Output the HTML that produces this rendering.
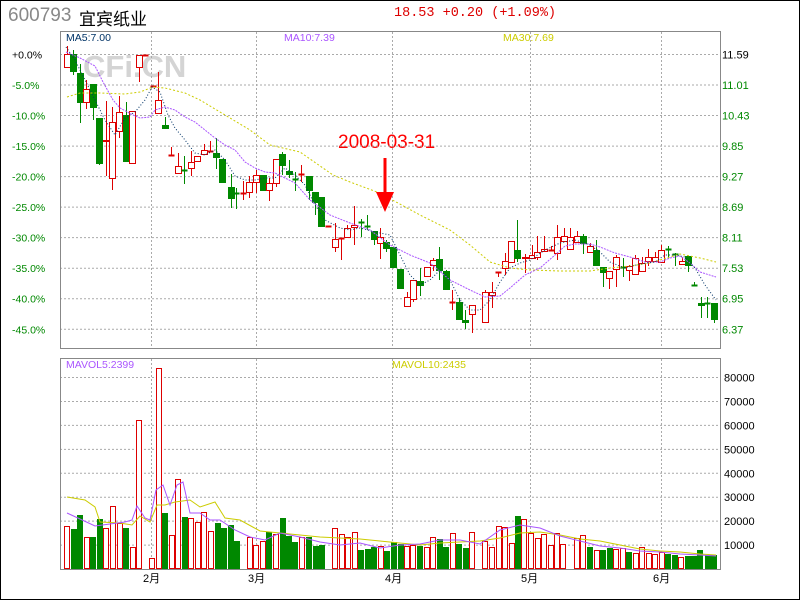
<!DOCTYPE html>
<html><head><meta charset="utf-8"><style>
html,body{margin:0;padding:0;background:#fff}
#c{position:relative;width:798px;height:598px;border:1px solid #000;overflow:hidden;font-family:"Liberation Sans","Noto Sans CJK SC",sans-serif}
.t{position:absolute;white-space:nowrap}
</style></head><body><div id="c">
<div class="t" style="left:7px;top:4px;font-size:19px;color:#888">600793</div>
<div class="t" style="left:78px;top:4px;font-size:17px;color:#000">宜宾纸业</div>
<div class="t" style="left:393px;top:5px;font-family:'Liberation Mono',monospace;font-size:13.5px;color:#d00">18.53 +0.20 (+1.09%)</div>
<svg id="s" width="800" height="600" style="position:absolute;left:-1px;top:-1px" xmlns="http://www.w3.org/2000/svg">
<g font-family="Liberation Sans, sans-serif" font-size="11">
<text x="338" y="148" font-size="19" fill="#f00" font-weight="normal">2008-03-31</text>
<text x="83" y="77" font-size="31" font-weight="bold" fill="#d4d4d4">CFi.CN</text>
</g>
</svg>
</div>
<script>
var s=document.getElementById('s'),NS='http://www.w3.org/2000/svg',h='';
function L(x1,y1,x2,y2,c,d,w){h+='<line x1="'+x1+'" y1="'+y1+'" x2="'+x2+'" y2="'+y2+'" stroke="'+c+'" stroke-width="'+(w||1)+'"'+(d?' stroke-dasharray="'+d+'"':'')+'/>';}
function T(x,y,t,c,fs,a){h+='<text x="'+x+'" y="'+y+'" fill="'+c+'" font-size="'+(fs||11)+'"'+(a?' text-anchor="'+a+'"':'')+' font-family="Liberation Sans, Noto Sans CJK SC, sans-serif">'+t+'</text>';}
// grids price
for(var i=0;i<10;i++){var y=54.5+i*30.53;L(60,y,720,y,'#aaa','2,2');
 T(12,y+4,(i==0?'+0.0%':'-'+(i*5)+'.0%'),i==0?'#000':'#080',10.5);
 T(722,y+4,(11.59-i*0.58).toFixed(2),i==0?'#000':'#080',11);}
var vx=[151.5,256.5,392.5,530.5,661.5];
vx.forEach(function(x){L(x,32,x,348,'#aaa','2,2');L(x,359,x,569,'#aaa','2,2');});
for(var i=1;i<=8;i++){var y=569-i*23.93;L(60,y,720,y,'#aaa','2,2');T(724,y+4,i*10000,'#000',11);}
h+='<rect x="60.5" y="31.5" width="660" height="317" fill="none" stroke="#888"/>';
h+='<rect x="60.5" y="358.5" width="660" height="211" fill="none" stroke="#888"/>';
[['2月',143],['3月',248],['4月',385],['5月',521],['6月',653]].forEach(function(m){T(m[1],582,m[0],'#000',11);});
T(66,41,'MA5:7.00','#036',10.5);T(284,41,'MA10:7.39','#a5f',10.5);T(503,41,'MA30:7.69','#cc0',10.5);
T(66,368,'MAVOL5:2399','#a5f',10.5);T(392,368,'MAVOL10:2435','#cc0',10.5);
// candles [x, top, bottom, high, low, color r/g]
var C=[[66.7,54,68,46,68,'r'],[73.3,54,72,50,75,'g'],[80,73,103,64,123,'g'],[86,89,103,80,109,'r'],[92.7,84,108,84,120,'g'],[99.3,118,164,118,165,'g'],[105.7,140,142,101,176,'r'],[112.3,122,179,107,190,'r'],[119.3,112,132,96,138,'r'],[126,115,162,102,162,'g'],[132.3,111,164,111,164,'r'],[138.5,55,68,55,82,'r'],[145,55,56,55,56,'r'],[152.7,86,87,86,87,'r'],[158.3,100,114,72,114,'r'],[165,125,129,117,129,'g'],[171,155,156,147,156,'r'],[177.7,166,174,153,174,'r'],[184.3,170,171,156,184,'g'],[191,162,169,151,176,'r'],[197,156,162,156,162,'r'],[203.7,150,155,144,155,'r'],[209.6,151,152,141,152,'r'],[216,153,158,138,169,'g'],[222.3,159,183,159,183,'g'],[230.7,187,199,174,208,'g'],[236.3,193,194,188,209,'g'],[243,193,194,181,200,'r'],[249,182,193,176,198,'r'],[256,175,183,170,193,'r'],[263,175,191,175,191,'g'],[269,183,191,178,201,'r'],[275.7,159,184,159,187,'r'],[282,154,166,152,175,'g'],[289,171,175,160,178,'g'],[295,179,180,172,191,'g'],[301,174,175,165,182,'r'],[309,176,191,176,200,'g'],[315,192,203,192,215,'g'],[321,197,227,197,227,'g'],[328,226,227,226,227,'r'],[334.7,239,248,223,252,'r'],[341,238,239,238,260,'r'],[347,228,238,225,238,'r'],[354,225,228,206,245,'r'],[360.7,222,223,219,237,'g'],[367,226,227,215,230,'g'],[373.7,231,240,231,245,'g'],[380,237,244,228,259,'r'],[386,242,249,240,252,'g'],[392.7,247,268,247,268,'g'],[400.3,269,289,269,289,'g'],[407,297,307,292,307,'r'],[413,280,300,280,302,'r'],[420,281,286,268,296,'g'],[426.7,267,277,267,277,'r'],[432.7,260,266,258,271,'r'],[438.7,259,271,247,280,'g'],[446,271,290,270,290,'g'],[452,302,303,290,310,'r'],[459,302,320,298,320,'g'],[465,320,323,310,329,'g'],[472,305,315,305,333,'r'],[484.7,292,323,290,323,'r'],[491.7,292,296,282,308,'r'],[498,272,273,272,277,'r'],[504.7,261,269,253,275,'r'],[511,241,263,241,263,'r'],[517,250,259,220,262,'g'],[524.7,257,259,254,273,'r'],[531.7,255,259,245,259,'r'],[537,252,258,236,260,'r'],[544,249,252,236,252,'r'],[550.7,250,251,246,251,'r'],[557,237,254,225,260,'r'],[564,236,242,228,242,'r'],[570,237,250,228,250,'r'],[577,236,243,231,243,'r'],[583,236,244,234,254,'g'],[589.7,246,253,243,253,'r'],[596,250,266,240,266,'g'],[603,267,273,267,287,'g'],[609,271,279,271,289,'r'],[616,257,270,255,287,'r'],[623,267,268,258,277,'g'],[629,266,271,265,281,'r'],[635,258,275,255,275,'r'],[641.7,263,272,257,272,'r'],[648,257,262,249,266,'r'],[655,257,262,252,262,'r'],[661,250,263,245,263,'r'],[668,249,250,246,259,'g'],[675,254,255,253,266,'g'],[681.7,261,265,257,265,'r'],[688,256,266,256,272,'g'],[694,285,286,282,286,'g'],[701,303,306,297,318,'g'],[707,303,304,297,318,'g'],[714,303,320,303,323,'g']];
C.forEach(function(c){var x=Math.round(c[0]),col=c[5]=='r'?'#d00':'#080';
 L(x+0.5,c[3],x+0.5,c[4],col);
 var hgt=c[2]-c[1];
 if(hgt<=1.5){L(x-2.5,c[1]+0.5,x+3.5,c[1]+0.5,col,0,2);}
 else if(c[5]=='r')h+='<rect x="'+(x-2.5)+'" y="'+(c[1]+0.5)+'" width="6" height="'+(hgt-1)+'" fill="#fff" stroke="#d00"/>';
 else h+='<rect x="'+(x-3)+'" y="'+c[1]+'" width="7" height="'+hgt+'" fill="#080"/>';});
function P(pts,c,d){h+='<polyline fill="none" stroke="'+c+'" stroke-width="1" '+(d?'stroke-dasharray="'+d+'"':'')+' points="'+pts.map(function(p){return p.join(',')}).join(' ')+'"/>';}
P([[67,97],[80,93],[100,93],[125,94],[140,92],[153,87],[165,88],[185,93],[200,100],[220,112],[240,124],[250,130],[270,145],[300,152],[333,175],[350,182],[377,192],[398,203],[420,215],[450,230],[470,245],[490,262],[510,268],[530,270],[560,271],[590,271],[610,268],[630,266],[650,263],[680,254],[700,258],[716,262]],'#cc0','2,2');
P([[66,52],[80,58],[95,66],[103,82],[113,100],[120,108],[133,115],[140,118],[150,117],[155,110],[165,107],[175,110],[185,117],[195,122],[205,130],[215,138],[225,145],[235,150],[245,162],[255,168],[265,172],[275,173],[285,178],[295,183],[310,200],[330,215],[350,223],[370,230],[390,245],[410,255],[430,263],[450,280],[470,290],[485,297],[500,296],[510,288],[525,275],[540,268],[555,255],[565,246],[575,244],[590,244],[600,247],[615,253],[630,257],[645,262],[660,262],[670,258],[680,256],[690,263],[700,272],[716,277]],'#a5f','2,1');
P([[66,47],[75,60],[85,80],[95,100],[105,120],[115,135],[125,118],[135,112],[145,100],[152,87],[160,92],[168,115],[175,128],[185,140],[195,153],[205,155],[215,150],[225,160],[235,176],[245,180],[255,180],[265,178],[275,178],[285,168],[295,175],[305,185],[315,205],[325,220],[340,228],[350,230],[360,228],[375,232],[390,235],[400,255],[410,275],[420,285],[430,280],[440,270],[450,280],[460,300],[470,310],[480,310],[490,300],[500,282],[510,268],[520,263],[530,260],[545,250],[560,243],[575,240],[590,245],[600,252],[610,262],[625,268],[640,264],[655,262],[665,255],[675,255],[685,257],[695,268],[705,285],[716,300]],'#036','1,2');
// volume
var V=[[64,526,'r'],[71,529,'g'],[77,515,'g'],[84,537,'r'],[90,537,'g'],[97,519,'g'],[103,528,'r'],[110,506,'r'],[117,523,'r'],[123,528,'g'],[130,547,'r'],[136,420,'r'],[149,558,'r'],[156,368,'r'],[162,513,'g'],[169,535,'r'],[175,479,'r'],[182,517,'g'],[188,518,'r'],[195,522,'r'],[201,512,'r'],[208,531,'r'],[215,523,'g'],[221,528,'g'],[228,525,'g'],[234,541,'g'],[247,537,'r'],[253,545,'r'],[260,541,'r'],[266,532,'g'],[273,534,'r'],[280,518,'g'],[286,536,'g'],[292,542,'g'],[299,537,'r'],[306,537,'g'],[313,546,'g'],[319,545,'g'],[332,528,'r'],[339,534,'r'],[345,537,'r'],[352,532,'r'],[358,550,'g'],[365,549,'g'],[371,547,'g'],[378,546,'r'],[384,551,'g'],[391,542,'g'],[398,544,'g'],[404,546,'r'],[410,545,'r'],[417,546,'g'],[424,547,'r'],[430,537,'r'],[437,539,'g'],[443,547,'g'],[450,533,'r'],[456,544,'g'],[463,548,'g'],[469,532,'r'],[482,541,'r'],[489,547,'r'],[496,526,'r'],[502,527,'r'],[509,543,'r'],[515,516,'g'],[521,519,'r'],[528,533,'r'],[535,538,'r'],[541,534,'r'],[548,545,'r'],[554,533,'r'],[560,544,'r'],[574,538,'r'],[580,535,'r'],[587,547,'g'],[594,550,'r'],[600,550,'g'],[607,548,'g'],[613,549,'r'],[620,548,'r'],[626,552,'g'],[633,553,'r'],[639,547,'r'],[646,553,'r'],[652,554,'r'],[659,552,'r'],[665,554,'g'],[672,555,'g'],[678,557,'r'],[685,556,'g'],[691,556,'g'],[697,550,'g'],[705,555,'g'],[711,555,'g']];
V.forEach(function(v){if(v[2]=='r')h+='<rect x="'+(v[0]+0.5)+'" y="'+(v[1]+0.5)+'" width="5" height="'+(569-v[1]-1)+'" fill="#fff" stroke="#d00"/>';else h+='<rect x="'+v[0]+'" y="'+v[1]+'" width="6" height="'+(569-v[1])+'" fill="#080"/>';});
P([[67,497],[85,500],[95,507],[100,522],[120,523],[132,525],[140,516],[150,522],[157,505],[165,505],[175,502],[190,500],[200,507],[215,502],[225,518],[240,520],[260,531],[280,533],[300,535],[320,537],[340,538],[360,539],[380,541],[400,543],[420,545],[440,543],[460,542],[480,541],[500,538],[520,533],[540,532],[560,535],[580,539],[600,541],[620,545],[640,549],[660,551],[680,552],[700,554],[716,555]],'#cc0');
P([[67,513],[80,519],[95,526],[110,524],[125,522],[132,520],[137,506],[145,518],[150,520],[156,490],[163,485],[170,505],[177,485],[183,482],[190,513],[200,513],[210,520],[220,520],[235,530],[250,537],[265,540],[280,533],[300,537],[320,542],[340,545],[360,543],[380,548],[400,545],[420,544],[440,540],[460,540],[480,544],[500,530],[520,525],[540,528],[560,536],[580,541],[600,546],[620,548],[640,551],[660,552],[680,554],[700,555],[716,556]],'#a5f');
// arrow
L(385,158,385,195,'#f00',0,3);
h+='<polygon points="376,192 394,192 385,212" fill="#f00"/>';
s.insertAdjacentHTML('beforeend',h);
</script>
</body></html>
